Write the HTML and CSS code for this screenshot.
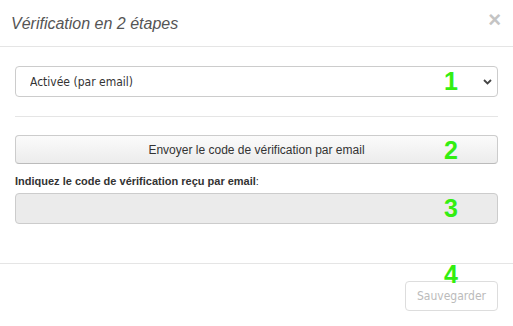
FILE: index.html
```html
<!DOCTYPE html>
<html lang="fr">
<head>
  <meta charset="UTF-8">
  <title>Vérification en 2 étapes</title>
  <link rel="stylesheet" href="styles.css">
</head>
<body>
  <div class="modal">
    <div class="modal-header">
      <h3>Vérification en 2 étapes</h3>
      <span class="close">&times;</span>
    </div>

    <div class="modal-body">
      <div class="field">
        <select class="select">
          <option>Activée (par email)</option>
        </select>
        <svg class="chevron" width="9" height="6" viewBox="0 0 9 6">
          <path d="M1 1l3.5 3.5L8 1" fill="none" stroke="#444" stroke-width="1.8"/>
        </svg>
        <span class="step">1</span>
      </div>

      <hr class="sep">

      <div class="field">
        <button class="btn-send">Envoyer le code de vérification par email</button>
        <span class="step">2</span>
      </div>

      <label class="code-label"><b>Indiquez le code de vérification reçu par email</b>:</label>
      <div class="field">
        <input type="text" class="code-input" disabled>
        <span class="step">3</span>
      </div>
    </div>

    <div class="modal-footer">
      <div class="field">
        <button class="btn-save" disabled>Sauvegarder</button>
        <span class="step step-4">4</span>
      </div>
    </div>
  </div>
</body>
</html>
```

FILE: styles.css
```css
body {
  margin: 0;
  background: #fff;
  font-family: "Liberation Sans", Arial, sans-serif;
  color: #333;
}
.modal {
  width: 513px;
}
.modal-header {
  height: 47px;
  border-bottom: 1px solid #e5e5e5;
  display: flex;
  align-items: center;
  justify-content: space-between;
  padding: 0 12px 0 11px;
  box-sizing: border-box;
}
.modal-header h3 {
  margin: 0;
  margin-top: 1px;
  font-size: 16px;
  font-weight: normal;
  font-style: italic;
  color: #555;
}
.close {
  font-size: 22px;
  font-weight: bold;
  color: #c4c4c4;
  line-height: 1;
  margin-top: -7px;
}
.modal-body {
  padding: 19px 15px 39px;
}
.field {
  position: relative;
}
.select {
  display: block;
  width: 100%;
  height: 31px;
  appearance: none;
  -webkit-appearance: none;
  background: #fff;
  border: 1px solid #ccc;
  border-radius: 4px;
  padding: 0 14px;
  font-family: "DejaVu Sans Condensed", "DejaVu Sans", sans-serif;
  font-size: 12px;
  color: #333;
  box-sizing: border-box;
}
.chevron {
  position: absolute;
  right: 6px;
  top: 13px;
}
.step {
  position: absolute;
  right: 40px;
  top: 3px;
  font-size: 25px;
  font-weight: bold;
  color: #33ee11;
  line-height: 1;
}
.sep {
  border: 0;
  border-top: 1px solid #e5e5e5;
  margin: 19px 0 18px;
}
.btn-send {
  display: block;
  width: 100%;
  height: 29px;
  border: 1px solid #ccc;
  border-bottom-color: #bbb;
  border-radius: 4px;
  background: linear-gradient(#fbfbfb, #ececec);
  font-family: "Liberation Sans", Arial, sans-serif;
  font-size: 12px;
  color: #333;
}
.code-label {
  display: block;
  margin: 11px 0 6px;
  font-size: 11px;
  color: #333;
}
.code-input {
  display: block;
  width: 100%;
  height: 31px;
  border: 1px solid #ccc;
  border-radius: 4px;
  background: #ebebeb;
  box-sizing: border-box;
}
.modal-footer {
  border-top: 1px solid #e5e5e5;
  padding: 17px 15px 15px;
  display: flex;
  justify-content: flex-end;
}
.btn-save {
  height: 30px;
  padding: 0 11px;
  border: 1px solid #ddd;
  border-radius: 4px;
  background: #fff;
  font-family: "DejaVu Sans Condensed", "DejaVu Sans", sans-serif;
  font-size: 12px;
  color: #bbb;
}
.step-4 {
  top: -19px;
  right: 40px;
}
```
